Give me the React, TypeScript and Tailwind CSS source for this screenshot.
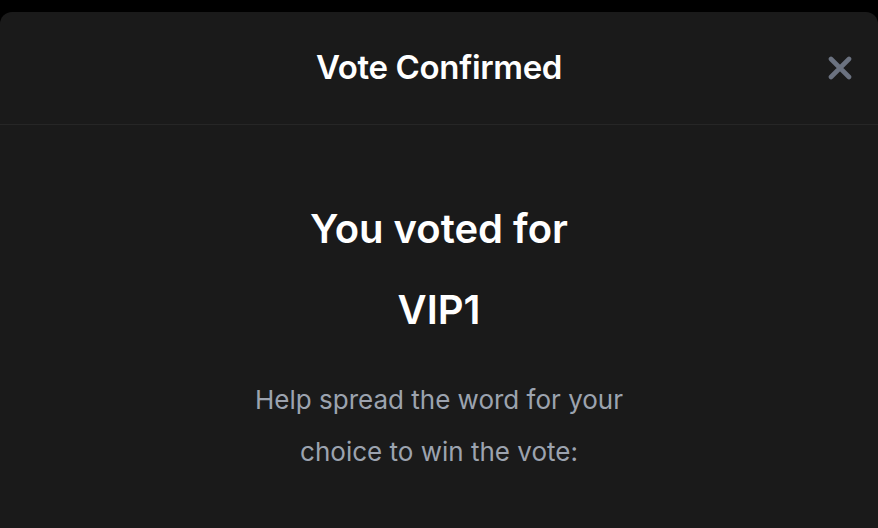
import React from 'react';

export default function App() {
  return (
    <div className="h-[528px] w-[878px] overflow-hidden bg-black pt-3" style={{ fontFamily: 'Inter, "Noto Sans", sans-serif' }}>
      <div className="flex h-full flex-col rounded-t-xl bg-[#1a1a1a]">
        <header className="relative flex h-[113px] items-center justify-center border-b border-[#262626]">
          <h1 className="text-[33px] font-semibold tracking-[-0.01em] text-white">Vote Confirmed</h1>
          <button className="absolute right-[26px] top-1/2 -translate-y-1/2 text-[#6b7280]">
            <svg width="24" height="24" viewBox="0 0 24 24" fill="none" stroke="currentColor" strokeWidth="4.6" strokeLinecap="round">
              <path d="M3 3l18 18M21 3L3 21" />
            </svg>
          </button>
        </header>
        <main className="flex flex-col items-center pt-[80px] text-center">
          <h2 className="text-[40px] font-semibold leading-[48px] text-white">You voted for</h2>
          <p className="mt-[33px] text-[40px] font-semibold leading-[48px] text-white">VIP1</p>
          <p className="mt-[40px] w-[420px] text-[26px] leading-[52px] text-[#9ca3af]">
            Help spread the word for your choice to win the vote:
          </p>
        </main>
      </div>
    </div>
  );
}
